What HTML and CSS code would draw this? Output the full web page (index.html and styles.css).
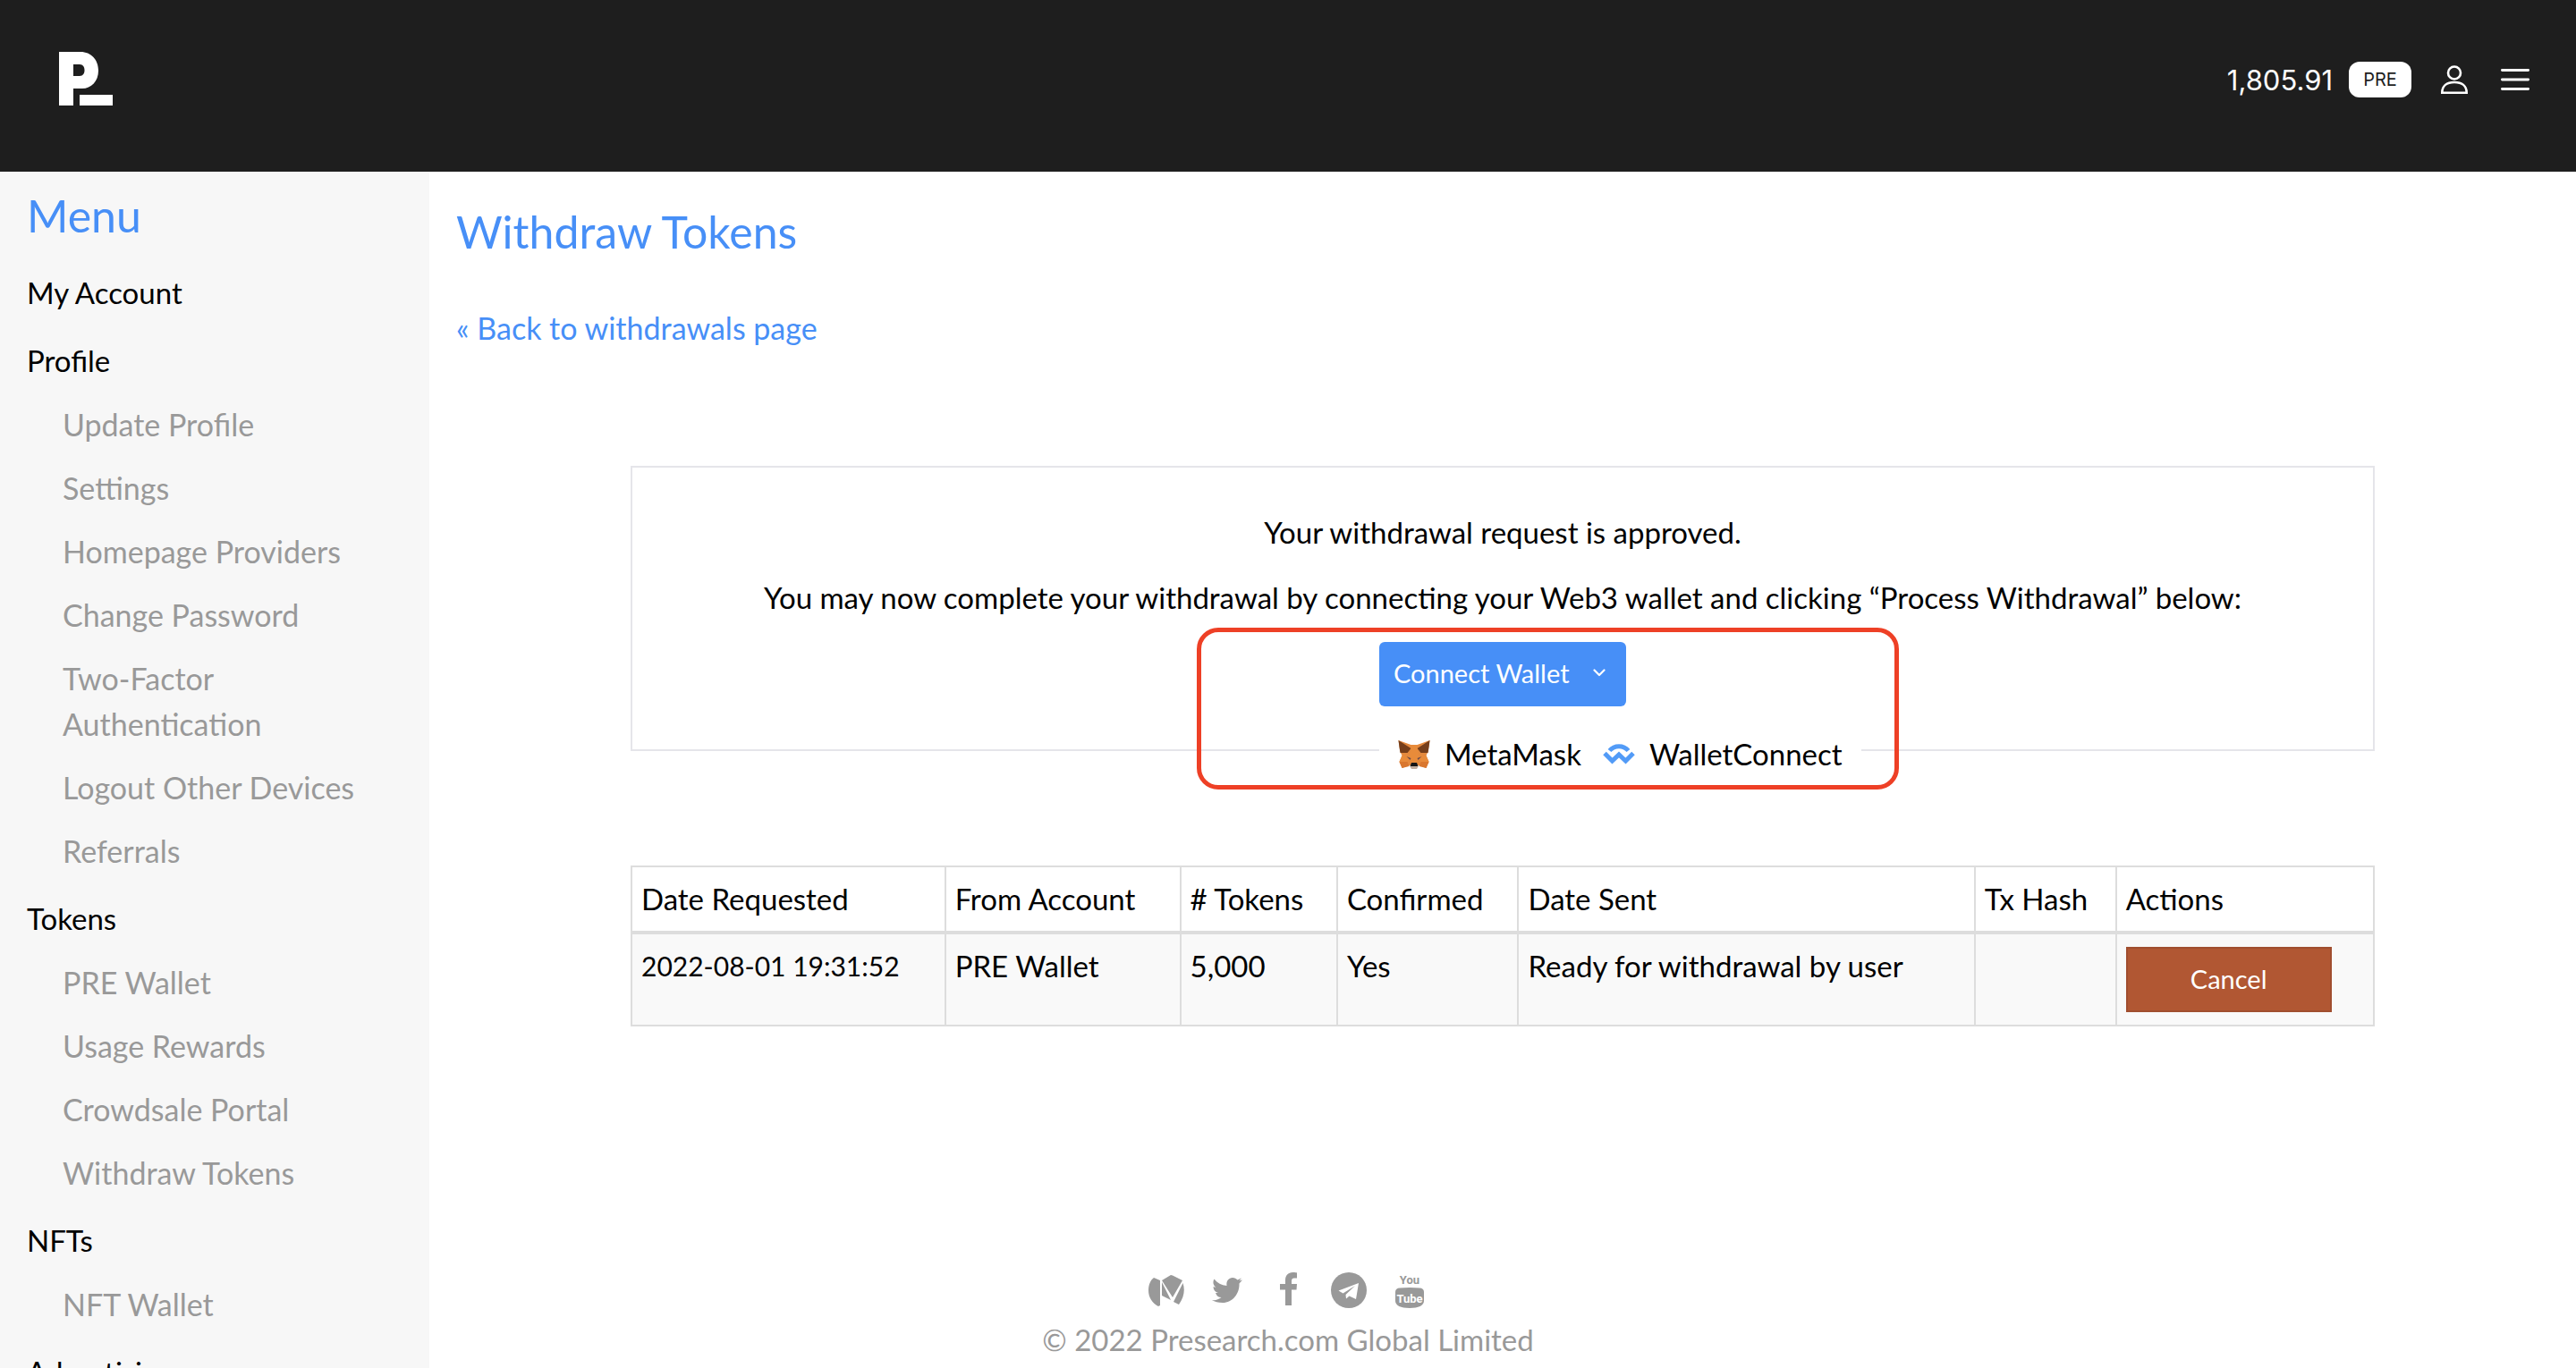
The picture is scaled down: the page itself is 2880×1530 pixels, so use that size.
FILE: index.html
```html
<!DOCTYPE html>
<html lang="en">
<head>
<meta charset="utf-8">
<title>Withdraw Tokens</title>
<link rel="stylesheet" href="styles.css">
</head>
<body>
<header class="topbar">
  <a class="logo" href="#" aria-label="Presearch home">
    <svg viewBox="0 0 60 60"><path fill="#fff" fill-rule="evenodd" d="M0 0H24C36 0 44 9 44 21S36 41 26 41H16V60H0ZM16 14V27H23C27 27 28.500 24 28.500 20.500S27 14 23 14Z"/><path fill="#fff" d="M23 48H60V60H23Z"/></svg>
  </a>
  <div class="account">
    <span class="balance">1,805.91</span>
    <span class="badge">PRE</span>
    <button class="icon-btn user" type="button" aria-label="Account">
      <svg viewBox="0 0 30 32" fill="none" stroke="#fff" stroke-width="2.600"><circle cx="15" cy="8.500" r="7"/><path d="M1.300 30.700C1.300 23 6.500 19 15 19S28.700 23 28.700 30.700Z"/></svg>
    </button>
    <button class="icon-btn burger" type="button" aria-label="Menu">
      <svg viewBox="0 0 32 24" stroke="#fff" stroke-width="2.800" stroke-linecap="round"><path d="M1.400 1.500H30.600M1.400 12H30.600M1.400 22.500H30.600"/></svg>
    </button>
  </div>
</header>
<div class="layout">
  <nav class="sidebar">
    <h2 class="title">Menu</h2>
    <ul class="menu">
      <li><a href="#">My Account</a></li>
      <li><a href="#">Profile</a>
        <ul class="submenu">
          <li><a href="#">Update Profile</a></li>
          <li><a href="#">Settings</a></li>
          <li><a href="#">Homepage Providers</a></li>
          <li><a href="#">Change Password</a></li>
          <li><a href="#">Two-Factor Authentication</a></li>
          <li><a href="#">Logout Other Devices</a></li>
          <li><a href="#">Referrals</a></li>
        </ul>
      </li>
      <li><a href="#">Tokens</a>
        <ul class="submenu">
          <li><a href="#">PRE Wallet</a></li>
          <li><a href="#">Usage Rewards</a></li>
          <li><a href="#">Crowdsale Portal</a></li>
          <li><a href="#">Withdraw Tokens</a></li>
        </ul>
      </li>
      <li><a href="#">NFTs</a>
        <ul class="submenu">
          <li><a href="#">NFT Wallet</a></li>
        </ul>
      </li>
      <li><a href="#">Advertising</a></li>
    </ul>
  </nav>
  <main class="content">
    <h1 class="title">Withdraw Tokens</h1>
    <a class="back" href="#">« Back to withdrawals page</a>
    <section class="card">
      <p>Your withdrawal request is approved.</p>
      <p>You may now complete your withdrawal by connecting your Web3 wallet and clicking “Process Withdrawal” below:</p>
      <div class="wallet">
        <button class="connect" type="button">Connect Wallet
          <svg viewBox="0 0 14 9" fill="none" stroke="#fff" stroke-width="2.200" stroke-linecap="round" stroke-linejoin="round"><path d="M1.500 1.500L7 7L12.500 1.500"/></svg>
        </button>
        <div class="wallet-menu">
          <a href="#">
            <svg viewBox="0 0 35 32"><path fill="#e4893d" d="M0 0L14 5H21L35 0L33 13L31 17L34 24L31 31L23 28H12L4 31L1 24L4 17L2 13Z"/><path fill="#763e1a" d="M0 0L14 9L10 14L2 14L1 8ZM35 0L21 9L25 14L33 14L34 8Z"/><path fill="#e88b3a" d="M14 5H21V9L23 17L21 26H14L12 17L14 9ZM1 24L4 17L12 18L10 24ZM34 24L31 17L23 18L25 24Z"/><path fill="#d9772f" d="M1 24H10L12 29L4 31ZM34 24H25L23 29L31 31Z"/><path fill="#6b4a4a" d="M9 18L14 20L13 22ZM26 18L21 20L22 22Z"/><path fill="#161616" d="M14.500 25H20.500L22 29H13Z"/><path fill="#c0ad9e" d="M12 28L14 29H21L23 28L20.500 32H14.500Z"/></svg>
            MetaMask</a>
          <a href="#">
            <svg viewBox="0 0 36 24" fill="none" stroke="#529bf7" stroke-width="5"><path d="M7.500 7.500C13 1 23 1 28.500 7.500"/><path d="M2 10.500L10.500 19L18 12L25.500 19L34 10.500"/></svg>
            WalletConnect</a>
        </div>
        <div class="highlight"></div>
      </div>
    </section>
    <table class="requests">
      <colgroup><col class="c-date"><col class="c-from"><col class="c-tokens"><col class="c-conf"><col class="c-sent"><col class="c-hash"><col></colgroup>
      <thead>
        <tr><th>Date Requested</th><th>From Account</th><th># Tokens</th><th>Confirmed</th><th>Date Sent</th><th>Tx Hash</th><th>Actions</th></tr>
      </thead>
      <tbody>
        <tr><td class="num">2022-08-01 19:31:52</td><td>PRE Wallet</td><td>5,000</td><td>Yes</td><td>Ready for withdrawal by user</td><td></td><td><button class="cancel" type="button">Cancel</button></td></tr>
      </tbody>
    </table>
    <footer class="footer">
      <div class="social">
        <a href="#" aria-label="Medium"><svg viewBox="0 0 40 40" fill="#999"><path d="M6 6L13 9V37L11 38C4 34 0 28 0 20C0 14 2 9 6 6ZM15 11L25 31L15 26ZM15 9L25 3L27 3.500L38 9L27 28ZM38.500 12C41 19 40 28 34 36L28 33Z"/></svg></a>
        <a href="#" aria-label="Twitter"><svg viewBox="0 0 40 40" fill="#999"><path d="M37 8.500L33.500 12.500C34 24 26 34 15 34C10 34 6 33 3 31C7 31.500 10.500 30.500 13.500 28C10 28 8 26 7 23H10C6.500 22 4.500 19.500 4.500 16L7.500 17C4.500 14.500 3.500 11 5.500 7.500C9 12 13.500 14.500 19.500 15C18.500 9.500 22 6 26 6C28.500 6 30 7 31.500 8.500L36 6.500L33.500 9.500Z"/></svg></a>
        <a href="#" aria-label="Facebook"><svg viewBox="0 0 40 40" fill="#999"><path d="M30 .5V6.500H27C24.500 6.500 24 8 24 9.500V13H30L29.500 19.500H24V37H17V19.500H11V13H17V9C17 3.500 20 0 25.500 0C28 0 29 .2 30 .5Z"/></svg></a>
        <a href="#" aria-label="Telegram"><svg viewBox="0 0 40 40"><circle cx="20" cy="20" r="20" fill="#999"/><path fill="#fff" d="M31 12L28 30L20.500 26.500L17 29.500L16.500 25L27 15L13.500 23.500L8.500 20.500Z"/></svg></a>
        <a href="#" aria-label="YouTube"><svg viewBox="0 0 40 40"><path fill="#999" d="M4 22C4 19 6 17.500 9 17.500C16 16.700 24 16.700 31 17.500C34 17.500 36 19 36 22V32C36 37 30 40 20 40S4 37 4 32Z"/><text class="yt" x="20" y="13" fill="#999">You</text><text class="yt" x="20" y="34" fill="#fff">Tube</text></svg></a>
      </div>
      <p>© 2022 Presearch.com Global Limited</p>
    </footer>
  </main>
</div>
</body>
</html>
```
FILE: styles.css
```css
* { box-sizing: border-box; }
body {
  margin: 0;
  height: 100vh;
  overflow: hidden;
  display: flex;
  flex-direction: column;
  font: 33px/51px Lato, "Open Sans", sans-serif;
  color: #000;
  background: #fff;
}
h1, h2, p, ul { margin: 0; padding: 0; font-weight: 400; }
ul { list-style: none; }
a { color: inherit; text-decoration: none; }
button { font: inherit; border: 0; padding: 0; cursor: pointer; }
svg { display: block; }

.topbar {
  flex: none;
  display: flex;
  justify-content: space-between;
  align-items: flex-start;
  height: 192px;
  padding: 58px 52px 0 66px;
  background: #1e1e1e;
}
.logo svg { width: 60px; height: 60px; }
.account {
  display: flex;
  align-items: center;
  height: 62px;
  color: #fff;
  font-family: Inter, sans-serif;
}
.balance { font-size: 31px; }
.badge {
  width: 70px;
  height: 40px;
  margin-left: 18px;
  border-radius: 12px;
  background: #fff;
  color: #1e1e1e;
  font-size: 20px;
  line-height: 40px;
  text-align: center;
}
.icon-btn { background: none; }
.user { margin-left: 33px; }
.user svg { width: 30px; height: 32px; }
.burger { margin-left: 37px; }
.burger svg { width: 32px; height: 24px; }

.layout { flex: 1; min-height: 0; display: flex; }
.sidebar {
  flex: 0 0 16.6667%;
  padding: 19px 30px 0;
  overflow: hidden;
  background: #f7f7f7;
}
.title { font-size: 50px; line-height: 60px; color: #478ff7; }
.menu { display: grid; gap: 25px; margin-top: 31px; }
.submenu {
  display: grid;
  gap: 20px;
  margin-top: 20px;
  padding: 0 40px;
  color: #999;
  font-size: 34px;
}

.content {
  flex: 1;
  display: flex;
  flex-direction: column;
  padding: 37px 30px 6px;
}
.back { align-self: flex-start; margin-top: 52px; color: #478ff7; font-size: 34px; }
.card {
  width: 83.3333%;
  margin: 129px auto 0;
  padding: 47px 30px 48px;
  border: 2px solid #e5e5ea;
  text-align: center;
}
.card p + p { margin-top: 22px; }
.wallet { position: relative; width: 276px; margin: 24px auto 0; }
.connect {
  display: flex;
  align-items: center;
  justify-content: space-between;
  width: 100%;
  height: 72px;
  padding: 0 23px 3px 16px;
  border-radius: 6px;
  background: #478ff7;
  color: #fff;
  font-size: 29px;
}
.connect svg { width: 14px; height: 9px; }
.wallet-menu {
  position: absolute;
  top: 100%;
  left: 0;
  display: flex;
  gap: 24px;
  padding: 28px 21px 14px;
  background: #fff;
}
.wallet-menu a { display: flex; align-items: center; gap: 16px; }
.wallet-menu svg { width: 36px; height: 32px; }
.highlight {
  position: absolute;
  top: -16px;
  left: -204px;
  width: 785px;
  height: 181px;
  border: 5px solid #ee4026;
  border-radius: 24px;
  pointer-events: none;
}

.requests {
  width: 83.3333%;
  margin: 128px auto 0;
  table-layout: fixed;
  border-collapse: collapse;
  border: 2px solid #ddd;
}
.c-date { width: 18%; }
.c-from { width: 13.5%; }
.c-tokens { width: 9%; }
.c-conf { width: 10.4%; }
.c-sent { width: 26.2%; }
.c-hash { width: 8.1%; }
.requests th, .requests td {
  padding: 10px;
  border: 2px solid #ddd;
  font-weight: 400;
  text-align: left;
  vertical-align: top;
}
.requests th { border-bottom-width: 4px; }
.requests td { background: #f9f9f9; }
.requests .num { font-size: 30px; }
.cancel {
  display: block;
  width: 230px;
  height: 73px;
  margin: 4px 0;
  padding-bottom: 3px;
  border: 2px solid #a04e2f;
  background: #b15733;
  color: #fff;
  font-size: 29px;
}

.footer {
  margin-top: auto;
  margin-right: 16.6667vw;
  color: #999;
  text-align: center;
}
.social { display: flex; justify-content: center; gap: 28px; margin-bottom: 10px; }
.social svg { width: 40px; height: 40px; }
.yt { font: 700 13px "Liberation Sans Narrow", Roboto, sans-serif; text-anchor: middle; }
```
